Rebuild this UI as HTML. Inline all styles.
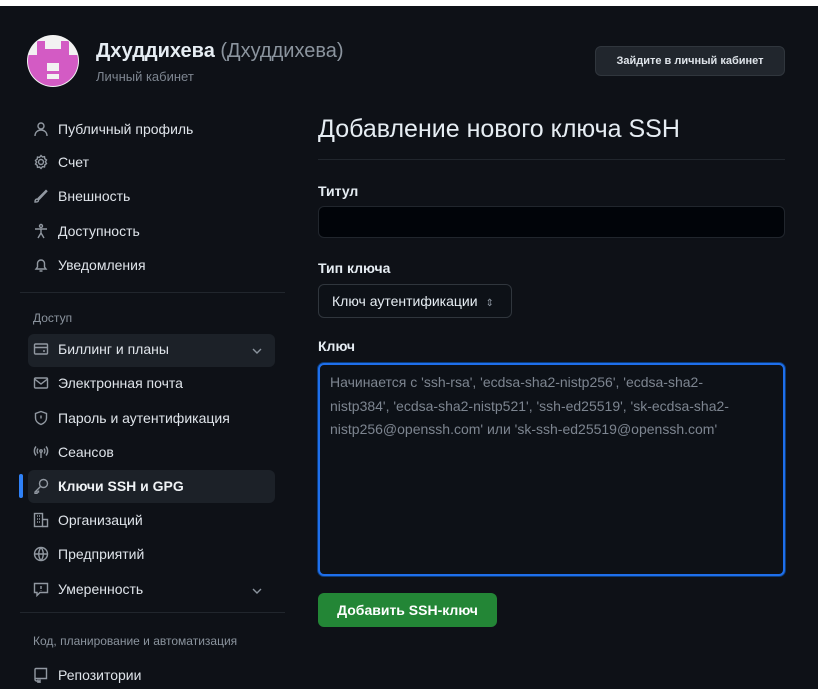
<!DOCTYPE html><html><head><meta charset="utf-8"><style>
*{box-sizing:border-box;margin:0;padding:0}
body{width:818px;height:689px;background:#0e1117;font-family:"Liberation Sans","Noto Sans CJK SC",sans-serif;color:#e6edf3;position:relative;overflow:hidden}
.a{position:absolute;white-space:nowrap}
.top{left:0;top:0;width:818px;height:6px;background:#fff}
.nav{left:33px;font-size:14px;color:#dfe4ea;display:flex;align-items:center;gap:9px}
.nav svg{width:16px;height:16px;stroke:#9198a1;fill:none;stroke-width:1.4}
.sec{left:33px;font-size:12px;color:#8b949e}
.hr{height:1px;background:#21262d}
.lab{left:318px;font-size:14px;font-weight:bold;color:#e6edf3}
.chev{left:250px;width:14px;height:14px}
</style></head><body>
<div class="a top"></div>
<svg class="a" style="left:27px;top:35px" width="52" height="52" viewBox="0 0 52 52"><circle cx="26" cy="26" r="26" fill="#f2f2f2"/><clipPath id="c"><circle cx="26" cy="26" r="25"/></clipPath><g clip-path="url(#c)" fill="#d35bc4"><rect x="0" y="20" width="52" height="32"/><rect x="10" y="6" width="8" height="16"/><rect x="34" y="6" width="8" height="16"/><rect x="18" y="14" width="16" height="8"/></g><rect x="20" y="28" width="12" height="16" fill="#f2f2f2"/><rect x="20" y="36" width="12" height="3" fill="#d35bc4"/></svg>
<div class="a" style="left:96px;top:40px;font-size:20px"><b>Дхуддихева</b> <span style="color:#8b949e">(Дхуддихева)</span></div>
<div class="a" style="left:96px;top:69px;font-size:13px;color:#7d8590">Личный кабинет</div>
<div class="a" style="left:595px;top:46px;width:190px;height:30px;background:#21262d;border:1px solid #30363d;border-radius:6px;font-size:11px;font-weight:bold;color:#dfe4ea;text-align:center;line-height:28px">Зайдите в личный кабинет</div>

<div class="a nav" style="top:121px"><svg viewBox="0 0 16 16"><circle cx="8" cy="5" r="3"/><path d="M2 15c0-4 3-6 6-6s6 2 6 6"/></svg>Публичный профиль</div>
<div class="a nav" style="top:154px"><svg viewBox="0 0 16 16"><circle cx="8" cy="8" r="2.5"/><path d="M8 1.5l1.5 1.5 2-.3.3 2 1.7 1.3-1 1.8 1 1.8-1.7 1.3-.3 2-2-.3L8 14.5 6.5 13l-2 .3-.3-2L2.5 10l1-1.8-1-1.8 1.7-1.3.3-2 2 .3z"/></svg>Счет</div>
<div class="a nav" style="top:188px"><svg viewBox="0 0 16 16"><path d="M2 14c0-2 1-3 2.5-3l1 1c0 2-1.5 2-3.5 2zM5 10.5L13 2.5l.8.8L6 11.5"/></svg>Внешность</div>
<div class="a nav" style="top:223px"><svg viewBox="0 0 16 16"><circle cx="8" cy="3" r="1.5"/><path d="M2 6h12M8 6v4M5 15l3-5 3 5"/></svg>Доступность</div>
<div class="a nav" style="top:257px"><svg viewBox="0 0 16 16"><path d="M3 12h10l-1.5-2V6.5a3.5 3.5 0 0 0-7 0V10zM6.5 14h3"/></svg>Уведомления</div>
<div class="a hr" style="left:20px;top:292px;width:265px"></div>
<div class="a sec" style="top:311px">Доступ</div>
<div class="a" style="left:28px;top:334px;width:247px;height:33px;background:#1c2128;border-radius:6px"></div>
<div class="a nav" style="top:341px"><svg viewBox="0 0 16 16"><rect x="1.5" y="3" width="13" height="10" rx="1"/><path d="M1.5 6.5h13M10 10h2"/></svg>Биллинг и планы</div>
<svg class="a chev" style="top:344px" viewBox="0 0 14 14" fill="none" stroke="#8b949e" stroke-width="1.4"><path d="M3 5l4 4 4-4"/></svg>
<div class="a nav" style="top:375px"><svg viewBox="0 0 16 16"><rect x="1.5" y="3" width="13" height="10" rx="1"/><path d="M1.5 4l6.5 5 6.5-5"/></svg>Электронная почта</div>
<div class="a nav" style="top:410px"><svg viewBox="0 0 16 16"><path d="M8 1.5l5.5 2v4.5c0 3.5-3 5.5-5.5 6.5C5.5 13.5 2.5 11.5 2.5 8V3.5z"/><path d="M8 5.5v3"/></svg>Пароль и аутентификация</div>
<div class="a nav" style="top:444px"><svg viewBox="0 0 16 16"><circle cx="8" cy="7" r="1.2"/><path d="M8 8v6M5 4.5a4 4 0 0 0 0 5M11 4.5a4 4 0 0 1 0 5M3 2.5a7 7 0 0 0 0 9M13 2.5a7 7 0 0 1 0 9"/></svg>Сеансов</div>
<div class="a" style="left:28px;top:470px;width:247px;height:33px;background:#1c2128;border-radius:6px"></div>
<div class="a" style="left:19px;top:474px;width:4px;height:24px;background:#2f81f7;border-radius:2px"></div>
<div class="a nav" style="top:478px;font-weight:bold;color:#f0f3f6"><svg viewBox="0 0 16 16"><circle cx="10.5" cy="5.5" r="4"/><path d="M7.5 8.5L2 14v1.5h2V14h1.5v-1.5"/></svg>Ключи SSH и GPG</div>
<div class="a nav" style="top:512px"><svg viewBox="0 0 16 16"><rect x="1.5" y="1.5" width="8" height="13"/><path d="M9.5 7.5h5v7h-5M4 4h1M6 4h1M4 7h1M6 7h1M4 10h1M6 10h1"/></svg>Организаций</div>
<div class="a nav" style="top:546px"><svg viewBox="0 0 16 16"><circle cx="8" cy="8" r="6.5"/><path d="M1.5 8h13M8 1.5c-3 3.5-3 9.5 0 13M8 1.5c3 3.5 3 9.5 0 13"/></svg>Предприятий</div>
<div class="a nav" style="top:581px"><svg viewBox="0 0 16 16"><path d="M1.5 2.5h13v9H7l-3 3v-3H1.5z"/><path d="M8 5v3M8 9.5v.5"/></svg>Умеренность</div>
<svg class="a chev" style="top:584px" viewBox="0 0 14 14" fill="none" stroke="#8b949e" stroke-width="1.4"><path d="M3 5l4 4 4-4"/></svg>
<div class="a hr" style="left:20px;top:612px;width:265px"></div>
<div class="a sec" style="top:634px">Код, планирование и автоматизация</div>
<div class="a nav" style="top:667px"><svg viewBox="0 0 16 16"><path d="M3 1.5h10.5v10H3a1 1 0 0 0-1 1v-10a1 1 0 0 1 1-1zM2 12.5a1.5 1.5 0 0 0 1.5 1.5H5M5 12.5v3l1-1 1 1v-3"/></svg>Репозитории</div>

<div class="a" style="left:318px;top:115px;font-size:25px;color:#e6edf3">Добавление нового ключа SSH</div>
<div class="a hr" style="left:318px;top:159px;width:467px"></div>
<div class="a lab" style="top:183px">Титул</div>
<div class="a" style="left:318px;top:206px;width:467px;height:32px;background:#010409;border:1px solid #21262d;border-radius:6px"></div>
<div class="a lab" style="top:260px">Тип ключа</div>
<div class="a" style="left:318px;top:284px;width:194px;height:34px;background:#0d1117;border:1px solid #30363d;border-radius:6px;font-size:14px;color:#e6edf3;line-height:32px;padding-left:13px">Ключ аутентификации <span style="color:#8b949e;font-size:10px;margin-left:4px">&#8661;</span></div>
<div class="a lab" style="top:338px">Ключ</div>
<div class="a" style="left:318px;top:363px;width:467px;height:213px;background:#0d1117;border:2px solid #1f6feb;border-radius:6px;font-size:14px;line-height:23.5px;color:#7d8590;padding:6px 10px;box-shadow:0 0 0 1px #0b3c7a">Начинается с 'ssh-rsa', 'ecdsa-sha2-nistp256', 'ecdsa-sha2-<br>nistp384', 'ecdsa-sha2-nistp521', 'ssh-ed25519', 'sk-ecdsa-sha2-<br>nistp256@openssh.com' или 'sk-ssh-ed25519@openssh.com'</div>
<div class="a" style="left:318px;top:593px;width:179px;height:34px;background:#238636;border-radius:6px;font-size:14px;font-weight:bold;color:#fff;text-align:center;line-height:34px">Добавить SSH-ключ</div>
</body></html>
